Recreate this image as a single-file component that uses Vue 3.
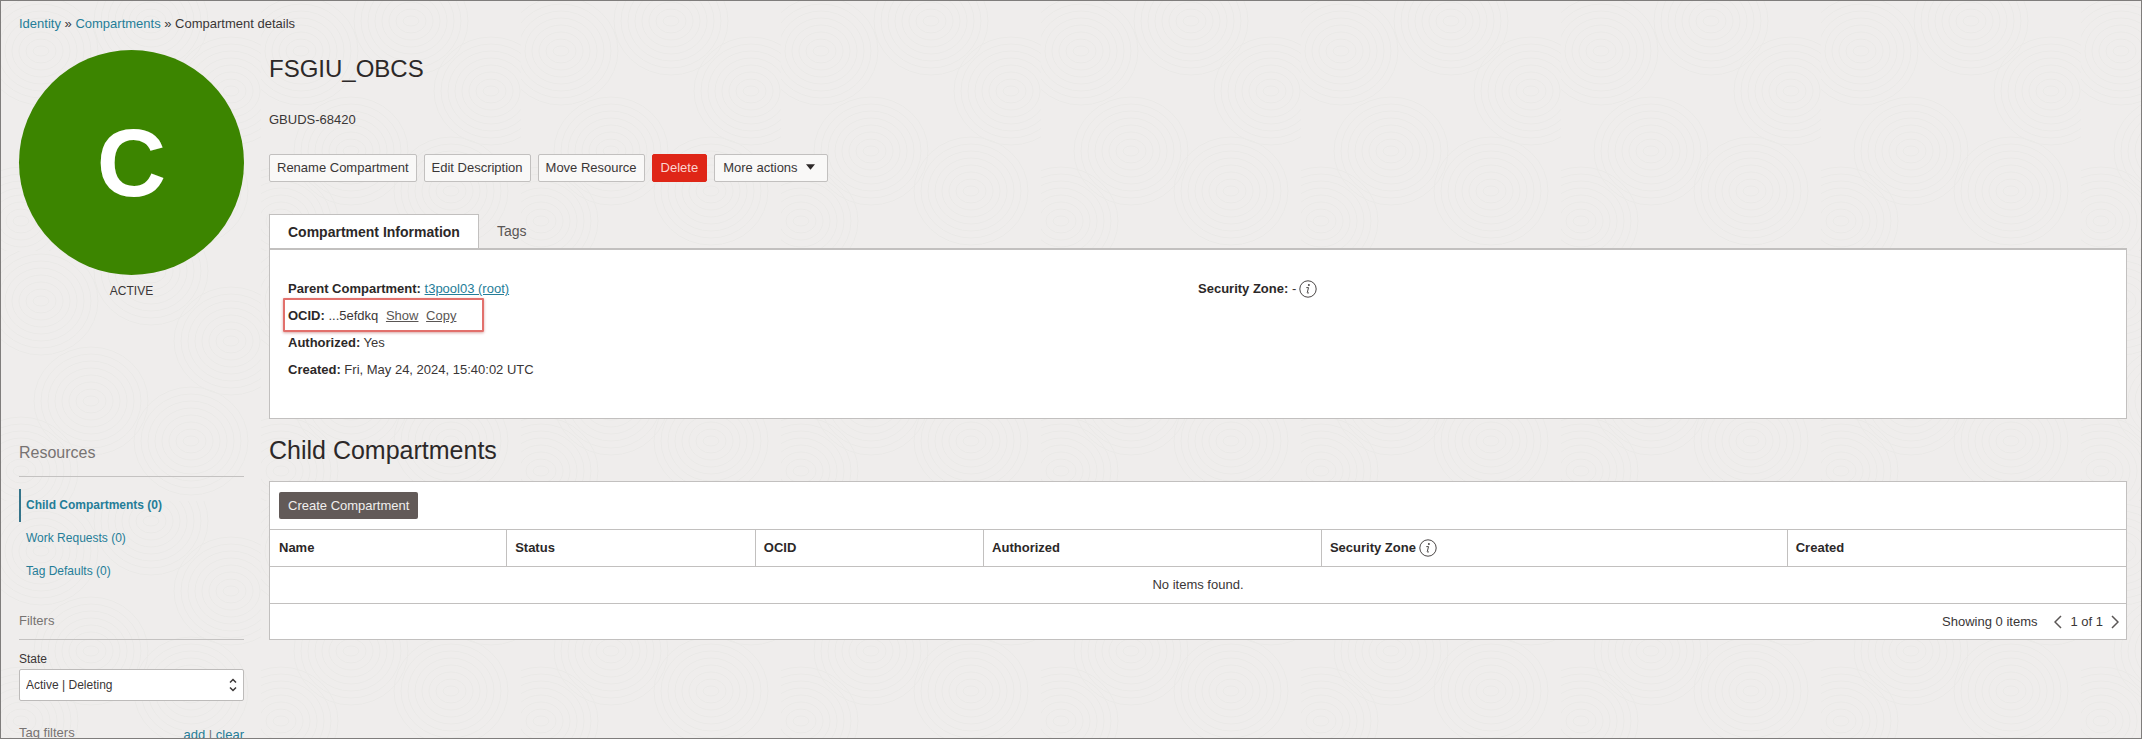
<script setup>
import { ref } from 'vue'

const state = ref('Active | Deleting')
const actions = ['Rename Compartment', 'Edit Description', 'Move Resource']
const resources = [
  { name: 'Child Compartments (0)', active: true },
  { name: 'Work Requests (0)', active: false },
  { name: 'Tag Defaults (0)', active: false },
]
const columns = [
  { name: 'Name', cls: 'c-name' },
  { name: 'Status', cls: 'c-status' },
  { name: 'OCID', cls: 'c-ocid' },
  { name: 'Authorized', cls: 'c-auth' },
  { name: 'Security Zone', cls: 'c-zone', info: true },
  { name: 'Created', cls: 'c-created' },
]
const rings = [8, 15, 22, 29, 36, 43, 50, 57]
const hills = [
  { x: 40, y: 50 }, { x: 150, y: 20 }, { x: 230, y: 90 },
  { x: 90, y: 150 }, { x: 190, y: 190 }, { x: 20, y: 220 },
]
</script>

<template>
  <div class="page">
    <svg class="texture" aria-hidden="true">
      <defs>
        <pattern id="contours" width="260" height="250" patternUnits="userSpaceOnUse">
          <g v-for="(h, i) in hills" :key="i" fill="none" stroke="#eae9e7">
            <ellipse v-for="r in rings" :key="r" :cx="h.x" :cy="h.y" :rx="r" :ry="r - 3" />
          </g>
        </pattern>
      </defs>
      <rect width="100%" height="100%" fill="url(#contours)" />
    </svg>

    <nav class="crumbs" aria-label="Breadcrumb">
      <a href="#">Identity</a> » <a href="#">Compartments</a> » <span>Compartment details</span>
    </nav>

    <div class="layout">
      <aside class="side">
        <div class="badge">C</div>
        <p class="status">ACTIVE</p>

        <h3 class="side-title resources-title">Resources</h3>
        <ul class="links">
          <li v-for="r in resources" :key="r.name" :class="{ active: r.active }">
            <a href="#">{{ r.name }}</a>
          </li>
        </ul>

        <h4 class="side-title filters-title">Filters</h4>
        <label class="state-label" for="state">State</label>
        <div class="select">
          <select id="state" v-model="state">
            <option>Active | Deleting</option>
          </select>
          <svg class="updown" viewBox="0 0 8 14" aria-hidden="true">
            <path d="M1 4.5 4 1.5 7 4.5M1 9.5 4 12.5 7 9.5" />
          </svg>
        </div>
        <div class="tag-filters">
          <span>Tag filters</span>
          <span class="tag-links"><a href="#">add</a> | <a href="#">clear</a></span>
        </div>
      </aside>

      <main class="main">
        <h1>FSGIU_OBCS</h1>
        <p class="desc">GBUDS-68420</p>

        <div class="actions">
          <button v-for="a in actions" :key="a" class="btn" type="button">{{ a }}</button>
          <button class="btn danger" type="button">Delete</button>
          <button class="btn more" type="button">
            More actions
            <svg class="caret" viewBox="0 0 10 6" aria-hidden="true"><path d="M0 0h10L5 6z" /></svg>
          </button>
        </div>

        <div class="tabs" role="tablist">
          <button class="tab on" type="button" role="tab" aria-selected="true">Compartment Information</button>
          <button class="tab" type="button" role="tab" aria-selected="false">Tags</button>
        </div>
        <section class="panel">
          <div>
            <p><b>Parent Compartment:</b> <a class="parent" href="#">t3pool03 (root)</a></p>
            <p class="ocid"><b>OCID:</b> ...5efdkq <a href="#">Show</a> <a href="#">Copy</a></p>
            <p><b>Authorized:</b> Yes</p>
            <p><b>Created:</b> Fri, May 24, 2024, 15:40:02 UTC</p>
          </div>
          <div>
            <p class="zone">
              <span><b>Security Zone:</b> -</span>
              <svg class="info" viewBox="0 0 18 18" aria-hidden="true">
                <circle cx="9" cy="9" r="8.2" />
                <path d="M7.3 7.6h2.2L8.3 12.6q-.2 1 1.6.2" />
                <circle class="dot" cx="9.9" cy="4.9" r="1" />
              </svg>
            </p>
          </div>
        </section>

        <h2>Child Compartments</h2>
        <section class="box">
          <div class="toolbar"><button class="create" type="button">Create Compartment</button></div>
          <table>
            <thead>
              <tr>
                <th v-for="c in columns" :key="c.name" :class="c.cls">
                  <span>{{ c.name }}
                    <svg v-if="c.info" class="info" viewBox="0 0 18 18" aria-hidden="true">
                      <circle cx="9" cy="9" r="8.2" />
                      <path d="M7.3 7.6h2.2L8.3 12.6q-.2 1 1.6.2" />
                      <circle class="dot" cx="9.9" cy="4.9" r="1" />
                    </svg>
                  </span>
                </th>
              </tr>
            </thead>
            <tbody>
              <tr><td :colspan="columns.length">No items found.</td></tr>
            </tbody>
          </table>
          <div class="pager">
            <span>Showing 0 items</span>
            <button type="button" aria-label="Previous page">
              <svg viewBox="0 0 8 14" aria-hidden="true"><path d="M7 1 1 7l6 6" /></svg>
            </button>
            <span class="count">1 of 1</span>
            <button type="button" aria-label="Next page">
              <svg viewBox="0 0 8 14" aria-hidden="true"><path d="m1 1 6 6-6 6" /></svg>
            </button>
          </div>
        </section>
      </main>
    </div>
  </div>
</template>

<style>
body {
  margin: 0;
  background: #fff;
}
</style>

<style scoped>
* {
  box-sizing: border-box;
}
h1, h2, h3, h4, p, ul {
  margin: 0;
  padding: 0;
  font-weight: 400;
}
.page {
  position: relative;
  height: calc(100vh - 4px);
  overflow: hidden;
  padding: 14px 14px 0 18px;
  border: 1px solid #7f7d7c;
  background: #efedec;
  color: #3a3636;
  font: 13px/20px "Liberation Sans", Arial, sans-serif;
}
.texture {
  position: absolute;
  inset: 0;
  width: 100%;
  height: 100%;
}
.crumbs, .layout {
  position: relative;
}
.crumbs {
  height: 35px;
  line-height: 18px;
}
a {
  color: #257d98;
  text-decoration: none;
}
.layout {
  display: flex;
  gap: 25px;
}
.side {
  flex: none;
  width: 225px;
  font-size: 12px;
}
.badge {
  display: flex;
  align-items: center;
  justify-content: center;
  height: 225px;
  border-radius: 50%;
  background: #3c8500;
  color: #fff;
  font-size: 96px;
  font-weight: 700;
}
.status {
  margin-top: 6px;
  text-align: center;
}
.side-title {
  border-bottom: 1px solid #c4c2c1;
  color: #777372;
}
.resources-title {
  margin-top: 140px;
  height: 36px;
  font-size: 16px;
  line-height: 24px;
}
.links {
  margin-top: 12px;
  list-style: none;
}
.links li {
  height: 33px;
  padding-left: 7px;
  line-height: 33px;
}
.links .active {
  padding-left: 5px;
  border-left: 2px solid #35748a;
  font-weight: 700;
}
.filters-title {
  margin-top: 23px;
  height: 29px;
  font-size: 13px;
  line-height: 20px;
}
.state-label {
  display: block;
  margin-top: 9px;
}
.select {
  position: relative;
}
select {
  display: block;
  width: 100%;
  height: 32px;
  padding: 0 6px;
  border: 1px solid #bdbbba;
  border-radius: 2px;
  background: #fff;
  color: #3a3636;
  font: inherit;
  appearance: none;
}
.updown {
  position: absolute;
  top: 9px;
  right: 7px;
  width: 8px;
  height: 14px;
  fill: none;
  stroke: #3a3636;
  stroke-width: 1.5;
}
.tag-filters {
  display: flex;
  justify-content: space-between;
  margin-top: 22px;
  color: #777372;
  font-size: 13px;
}
.tag-links {
  line-height: 24px;
}
.main {
  flex: 1;
  min-width: 0;
}
h1 {
  padding-top: 5px;
  color: #2c2828;
  font-size: 24px;
  line-height: 28px;
}
.desc {
  margin-top: 27px;
}
.actions {
  display: flex;
  gap: 7px;
  margin-top: 24px;
}
.btn {
  height: 28px;
  padding: 0 7px;
  border: 1px solid #c2c0bf;
  border-radius: 2px;
  background: #f9f8f7;
  color: #3a3636;
  font: inherit;
}
.danger {
  padding: 0 8px;
  border-color: #df2617;
  background: #df2617;
  color: #fbd5cf;
}
.more {
  padding: 0 12px 0 8px;
}
.caret {
  width: 9px;
  height: 6px;
  margin: 0 0 2px 5px;
  fill: #2c2828;
}
.tabs {
  display: flex;
  margin-top: 32px;
}
.tab {
  height: 34px;
  padding: 0 18px;
  border: 0;
  background: none;
  color: #5a5655;
  font: inherit;
  font-size: 14px;
}
.tab.on {
  border: 1px solid #c2c0bf;
  border-bottom: 0;
  background: #fff;
  color: #2c2828;
  font-weight: 700;
}
.panel {
  display: grid;
  grid-template-columns: 1fr 1fr;
  padding: 25px 18px 35px;
  border: 1px solid #c2c0bf;
  border-top-width: 2px;
  background: #fff;
}
.panel p {
  height: 27px;
  line-height: 27px;
}
b {
  color: #2c2828;
}
.parent {
  text-decoration: underline;
}
.ocid {
  position: relative;
}
.ocid a {
  margin-left: 4px;
  color: #5a5655;
  text-decoration: underline;
}
.ocid::before {
  content: "";
  position: absolute;
  inset: -4px auto -3px -5px;
  width: 197px;
  border: 2px solid #e2706c;
  border-radius: 1px;
  box-shadow: 0 1px 3px #d8a8a6;
}
.zone, th span {
  display: flex;
  align-items: center;
  gap: 3px;
}
.info {
  width: 18px;
  height: 18px;
  fill: none;
  stroke: #4a4645;
}
.info .dot {
  fill: #4a4645;
  stroke: none;
}
h2 {
  margin: 14px 0;
  color: #2c2828;
  font-size: 25px;
  line-height: 34px;
}
.box {
  border: 1px solid #c2c0bf;
  background: #fff;
}
.toolbar {
  padding: 10px 9px;
}
.create {
  display: block;
  height: 27px;
  padding: 0 9px;
  border: 0;
  border-radius: 2px;
  background: #625a58;
  color: #f1efee;
  font: inherit;
}
table {
  width: 100%;
  border-collapse: collapse;
  table-layout: fixed;
}
th, td {
  height: 37px;
  padding: 0 9px;
  border-top: 1px solid #c2c0bf;
  border-bottom: 1px solid #c2c0bf;
}
th {
  padding-left: 8px;
  color: #2c2828;
  text-align: left;
}
th:first-child {
  padding-left: 9px;
}
th + th {
  border-left: 1px solid #c2c0bf;
}
td {
  text-align: center;
}
.c-name { width: 12.75%; }
.c-status { width: 13.4%; }
.c-ocid { width: 12.3%; }
.c-auth { width: 18.2%; }
.c-zone { width: 25.1%; }
.c-created { width: 18.25%; }
.pager {
  display: flex;
  align-items: center;
  justify-content: flex-end;
  height: 35px;
  padding-right: 7px;
}
.pager button {
  display: flex;
  padding: 0;
  border: 0;
  background: none;
}
.pager svg {
  width: 8px;
  height: 14px;
  fill: none;
  stroke: #5a5655;
  stroke-width: 1.5;
}
.pager span:first-child {
  margin-right: 17px;
}
.count {
  margin: 0 8px;
}
</style>
